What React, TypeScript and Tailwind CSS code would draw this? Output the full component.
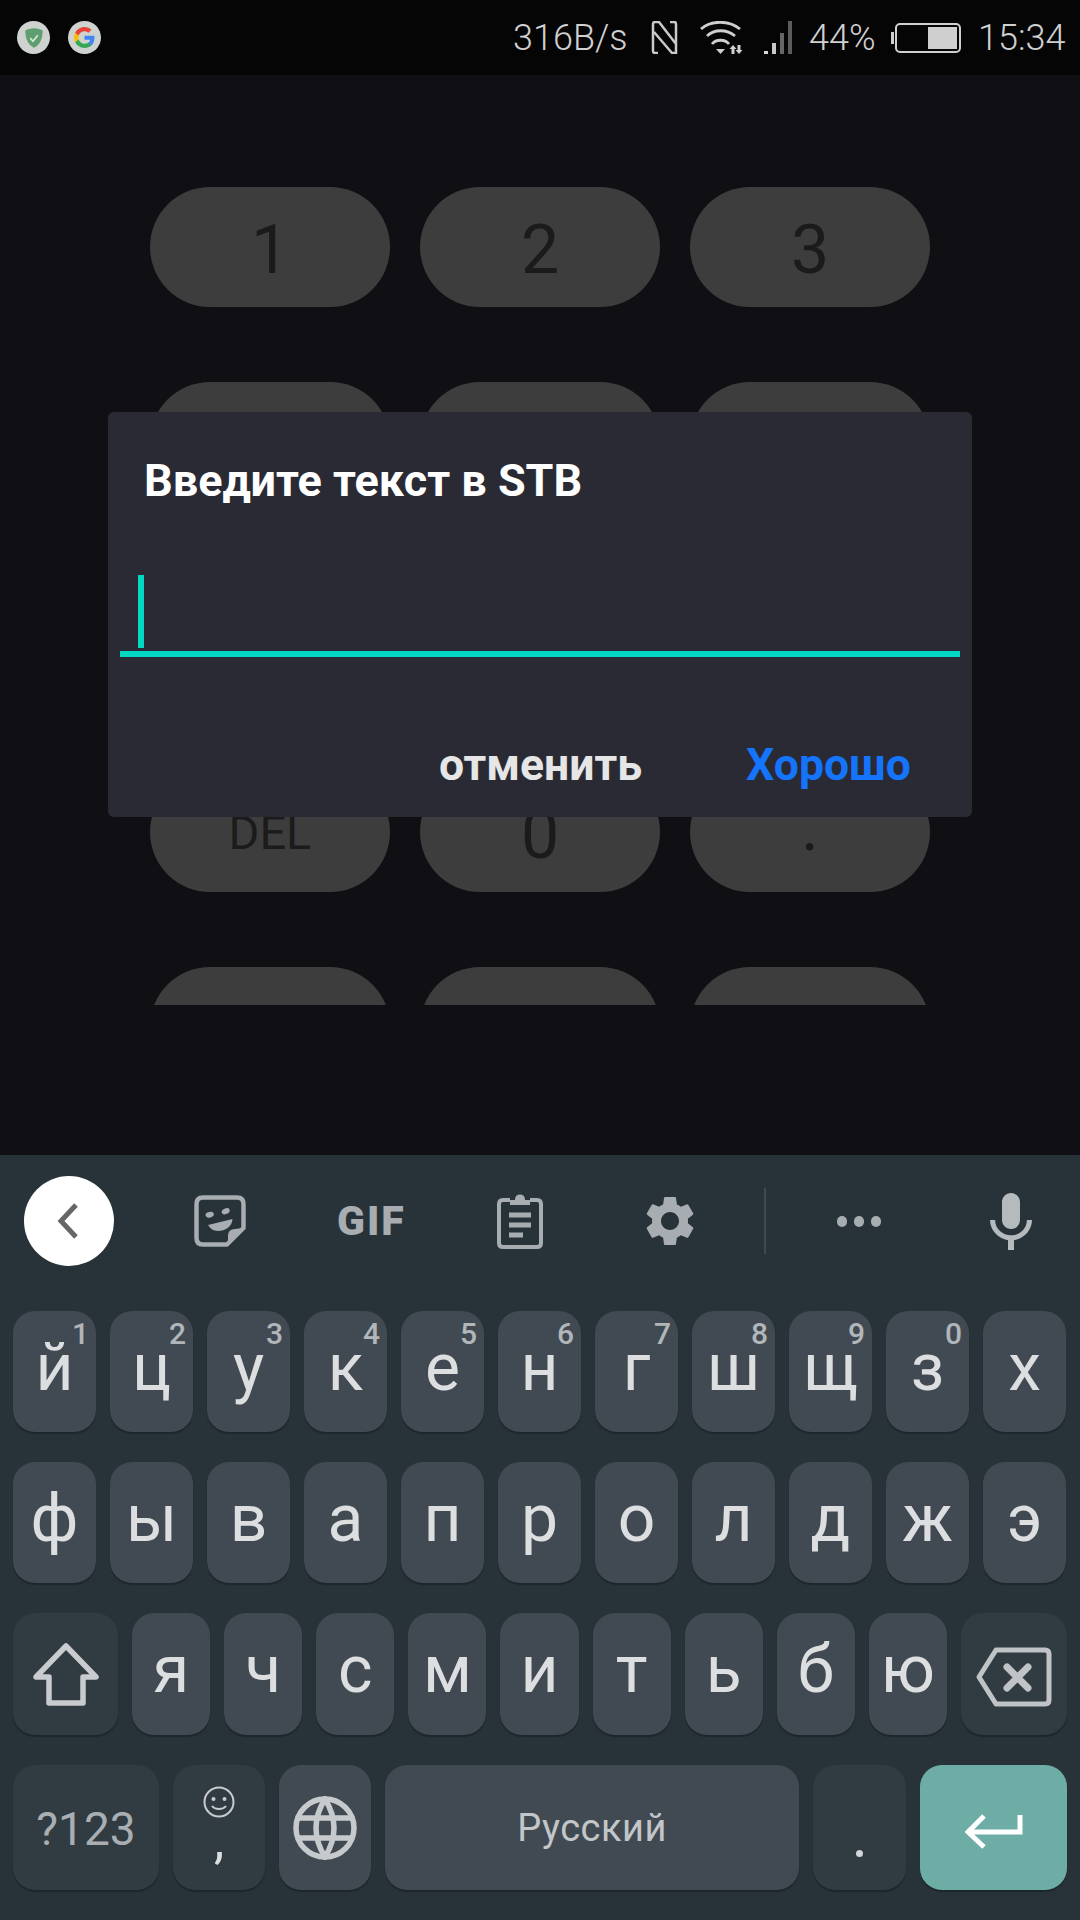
import React from "react";

const F = "[font-family:Roboto,'Noto_Sans',sans-serif]";

function Pill({ label, cls = "text-[68px] pt-[6px]" }: { label?: string; cls?: string }) {
  return (
    <div className={`w-[240px] h-[120px] rounded-[60px] bg-[#3d3d3d] flex items-center justify-center text-[#1b1b1b] ${cls}`}>
      {label}
    </div>
  );
}

function Key({
  label,
  hint,
  w,
  dark,
  children,
  h = "h-[121px]",
}: {
  label?: string;
  hint?: string;
  w: string;
  dark?: boolean;
  children?: React.ReactNode;
  h?: string;
}) {
  return (
    <div
      className={`relative ${w} ${h} shrink-0 rounded-[22px] ${dark ? "bg-[#303b42]" : "bg-[#414a52]"} shadow-[0_2px_1px_#1d262b] flex items-center justify-center text-[#dcdee0] text-[66px] leading-none`}
    >
      {label && <span className="-mt-[8px]">{label}</span>}
      {hint && (
        <span className="absolute right-[7px] top-[5px] text-[30px] leading-[36px] font-medium text-[#b1b6ba]">{hint}</span>
      )}
      {children}
    </div>
  );
}

function StatusBar() {
  return (
    <div className="h-[75px] shrink-0 bg-[#050506] flex items-center pl-[17px] text-[#d0d0d0] text-[36px] font-light">
      <div className="w-[33px] h-[33px] rounded-full bg-[#cfd3cf] flex items-center justify-center">
        <svg viewBox="0 0 24 24" className="w-[26px] h-[26px]">
          <path d="M12 3c-3 0-6 1-8 2 0 7 2 13 8 16 6-3 8-9 8-16-2-1-5-2-8-2z" fill="#5f9e6e" />
          <path d="M8.5 12l2.5 3 4.5-5.5" fill="none" stroke="#d8ecd9" strokeWidth="1.5" />
        </svg>
      </div>
      <div className="w-[33px] h-[33px] ml-[18px] rounded-full bg-[#cfd3cf] flex items-center justify-center">
        <svg viewBox="0 0 24 24" className="w-[25px] h-[25px]">
          <path d="M21.6 12.2c0-.7-.1-1.4-.2-2H12v3.9h5.4c-.2 1.2-.9 2.300-2 3v2.500h3.200c1.900-1.700 3-4.300 3-7.400z" fill="#4285f4" />
          <path d="M12 22c2.700 0 5-.9 6.600-2.400l-3.200-2.500c-.9.6-2 1-3.400 1-2.600 0-4.800-1.800-5.600-4.100H3.100v2.600C4.800 19.800 8.100 22 12 22z" fill="#34a853" />
          <path d="M6.400 14c-.2-.6-.3-1.300-.3-2s.1-1.400.3-2V7.400H3.100C2.400 8.700 2 10.300 2 12s.4 3.300 1.100 4.600L6.400 14z" fill="#fbbc05" />
          <path d="M12 6c1.500 0 2.800.5 3.800 1.500l2.900-2.900C17 3 14.700 2 12 2 8.100 2 4.800 4.200 3.100 7.400L6.400 10C7.200 7.700 9.400 6 12 6z" fill="#ea4335" />
        </svg>
      </div>
      <span className="ml-[412px] w-[115px] whitespace-nowrap leading-none">316B/s</span>
      <svg viewBox="0 0 27 33" className="ml-[23px] w-[27px] h-[33px]" fill="none" stroke="#c9c9c9" strokeWidth="2.5">
        <path d="M7 32H4Q2 32 2 30V3Q2 1 4 1H8L25 23M19 1H23Q25 1 25 3V32H21L3 11" />
      </svg>
      <svg viewBox="0 0 43 33" className="ml-[22px] w-[43px] h-[33px]" fill="none" stroke="#cfcfcf">
        <path d="M1 8C11 -1 29 -1 40 8" strokeWidth="2.800" />
        <path d="M7 15C14 8 27 8 35 15" strokeWidth="2.800" />
        <path d="M12 23C16 18 25 18 29 23" strokeWidth="2.800" />
        <path d="M16 28h9l-4.500 5z" fill="#cfcfcf" stroke="none" />
        <path d="M33 33V26" strokeWidth="3" />
        <path d="M29.500 28l3.500-4 3.500 4z" fill="#cfcfcf" stroke="none" />
        <path d="M39 24V31" strokeWidth="3" />
        <path d="M35.500 29l3.500 4 3.500-4z" fill="#cfcfcf" stroke="none" />
      </svg>
      <svg viewBox="0 0 28 33" className="ml-[21px] w-[28px] h-[33px]">
        <rect x="0" y="30" width="4" height="3" fill="#d8d8d8" />
        <rect x="8" y="22" width="4" height="11" fill="#c8c8c8" />
        <rect x="16" y="12" width="4" height="21" fill="#666666" />
        <rect x="24" y="0" width="4" height="33" fill="#5c5c5c" />
      </svg>
      <span className="ml-[17px] w-[65px] whitespace-nowrap leading-none">44%</span>
      <svg viewBox="0 0 70 30" className="ml-[17px] w-[70px] h-[30px]">
        <rect x="0" y="9" width="3" height="12" fill="#cfcfcf" />
        <rect x="5" y="1" width="64" height="28" rx="4" fill="none" stroke="#cfcfcf" strokeWidth="2" />
        <rect x="37" y="4" width="29" height="22" fill="#cfcfcf" />
      </svg>
      <span className="ml-[17px] whitespace-nowrap leading-none">15:34</span>
    </div>
  );
}

function Pad() {
  return (
    <div className="relative h-[1080px] shrink-0 bg-[#0f0f14]">
      <div className="h-[930px] overflow-hidden pt-[112px] flex flex-col gap-[75px] items-center">
        <div className="flex gap-[30px] shrink-0">
          <Pill label="1" />
          <Pill label="2" />
          <Pill label="3" />
        </div>
        <div className="flex gap-[30px] shrink-0">
          <Pill />
          <Pill />
          <Pill />
        </div>
        <div className="flex gap-[30px] shrink-0">
          <Pill />
          <Pill />
          <Pill />
        </div>
        <div className="flex gap-[30px] shrink-0">
          <Pill label="DEL" cls="text-[47px] pt-[2px]" />
          <Pill label="0" />
          <Pill label="." cls="text-[68px] pb-[10px]" />
        </div>
        <div className="flex gap-[30px] shrink-0">
          <Pill />
          <Pill />
          <Pill />
        </div>
      </div>
      <div className="absolute left-[108px] top-[337px] w-[864px] h-[405px] rounded-[6px] bg-[#2a2a35] flex flex-col">
        <div className="pl-[36px] pt-[44px] text-[45px] leading-[50px] font-bold text-white">Введите текст в STB</div>
        <div className="ml-[30px] mt-[69px] w-[6px] h-[73px] bg-[#00d8c4]" />
        <div className="ml-[12px] mt-[3px] w-[840px] h-[6px] bg-[#00d8c4]" />
        <div className="mt-[83px] flex justify-end pr-[61px] text-[44.5px] leading-[50px] font-bold">
          <span className="text-[#e6e6e6]">отменить</span>
          <span className="ml-[104px] text-[#1474fb]">Хорошо</span>
        </div>
      </div>
    </div>
  );
}

function Toolbar() {
  return (
    <div className="h-[132px] shrink-0 flex items-center pl-[24px]">
      <div className="w-[90px] h-[90px] rounded-full bg-white flex items-center justify-center">
        <svg viewBox="0 0 24 36" className="w-[24px] h-[36px] -ml-[2px]" fill="none" stroke="#666" strokeWidth="5">
          <path d="M20 2L5 18l15 16" strokeLinejoin="miter" />
        </svg>
      </div>
      <svg viewBox="0 0 52 52" className="ml-[80px] w-[52px] h-[52px]" fill="none" stroke="#a7adb0" strokeWidth="4.500">
        <path d="M9 2.500H43Q49.500 2.500 49.500 9V33L33 49.500H9Q2.500 49.500 2.500 43V9Q2.500 2.500 9 2.500Z" strokeLinejoin="round" />
        <path d="M49 33L34 49V41Q34 34 41 34Z" fill="#a7adb0" stroke="none" />
        <ellipse cx="15.700" cy="19.700" rx="4.200" ry="2.800" fill="#a7adb0" stroke="none" transform="rotate(-12 15.700 19.700)" />
        <ellipse cx="31.700" cy="16.300" rx="4.200" ry="2.800" fill="#a7adb0" stroke="none" transform="rotate(-25 31.700 16.300)" />
        <path d="M14 30L38.500 24C38 32 31 36 24 36C19 36 16 33 14 30Z" fill="#a7adb0" stroke="none" />
      </svg>
      <span className="ml-[91px] w-[67px] text-center text-[41px] leading-none font-black tracking-[2px] text-[#a7adb0]">GIF</span>
      <svg viewBox="0 0 46 56" className="ml-[93px] w-[46px] h-[56px]" fill="none" stroke="#a7adb0" strokeWidth="4">
        <path d="M13 7H6Q2 7 2 11V50Q2 54 6 54H40Q44 54 44 50V11Q44 7 40 7H33" />
        <path d="M13 12V7H18Q18 1.500 23 1.500Q28 1.500 28 7H33V12Z" fill="#a7adb0" stroke="none" />
        <path d="M12 22H34M12 32H34M12 42H26" strokeWidth="5" />
      </svg>
      <svg viewBox="2.500 2 19 20" className="ml-[103px] w-[48px] h-[50px]" fill="#a7adb0">
        <path d="M19.14 12.94c.04-.3.06-.61.06-.94 0-.32-.02-.64-.07-.94l2.030-1.580c.18-.14.23-.41.12-.61l-1.920-3.320c-.12-.22-.37-.29-.59-.22l-2.390.96c-.5-.38-1.030-.7-1.620-.94l-.36-2.540c-.04-.24-.24-.41-.48-.41h-3.840c-.24 0-.43.17-.47.41l-.36 2.540c-.59.24-1.130.57-1.620.94l-2.390-.96c-.22-.08-.47 0-.59.22L2.740 8.870c-.12.21-.08.47.12.61l2.030 1.580c-.05.3-.09.63-.09.94s.02.64.07.94l-2.030 1.580c-.18.14-.23.41-.12.61l1.920 3.320c.12.22.37.29.59.22l2.390-.96c.5.38 1.030.7 1.620.94l.36 2.540c.05.24.24.41.48.41h3.840c.24 0 .44-.17.47-.41l.36-2.540c.59-.24 1.130-.56 1.620-.94l2.390.96c.22.08.47 0 .59-.22l1.920-3.320c.12-.22.07-.47-.12-.61l-2.010-1.580zM12 15.600c-1.980 0-3.600-1.620-3.600-3.600s1.620-3.600 3.600-3.600 3.600 1.620 3.600 3.600-1.620 3.600-3.600 3.600z" />
      </svg>
      <div className="ml-[70px] w-[2px] h-[66px] bg-[#3f4a50]" />
      <div className="ml-[71px] w-[44px] flex justify-between">
        <div className="w-[10px] h-[11px] rounded-full bg-[#a7adb0]" />
        <div className="w-[10px] h-[11px] rounded-full bg-[#a7adb0]" />
        <div className="w-[10px] h-[11px] rounded-full bg-[#a7adb0]" />
      </div>
      <svg viewBox="5 2 14 19" className="ml-[109px] w-[42px] h-[57px]" fill="#b5babd" preserveAspectRatio="none">
        <path d="M12 14c1.660 0 3-1.340 3-3V5c0-1.660-1.340-3-3-3S9 3.340 9 5v6c0 1.660 1.340 3 3 3zm5.300-3c0 3-2.540 5.100-5.300 5.100S6.700 14 6.700 11H5c0 3.410 2.720 6.230 6 6.720V21h2v-3.280c3.280-.48 6-3.300 6-6.720h-1.700z" />
      </svg>
    </div>
  );
}

const row1: [string, string?][] = [
  ["й", "1"], ["ц", "2"], ["у", "3"], ["к", "4"], ["е", "5"], ["н", "6"], ["г", "7"], ["ш", "8"], ["щ", "9"], ["з", "0"], ["х"],
];
const row2 = ["ф", "ы", "в", "а", "п", "р", "о", "л", "д", "ж", "э"];
const row3 = ["я", "ч", "с", "м", "и", "т", "ь", "б", "ю"];

function Keyboard() {
  return (
    <div className="flex-1 bg-[#283339] flex flex-col">
      <Toolbar />
      <div className="flex flex-col gap-[30px] pl-[13px] pt-[24px] w-[1067px]">
        <div className="flex gap-[14px]">
          {row1.map(([l, h]) => (
            <Key key={l} label={l} hint={h} w="w-[83px]" />
          ))}
        </div>
        <div className="flex gap-[14px]">
          {row2.map((l) => (
            <Key key={l} label={l} w="w-[83px]" />
          ))}
        </div>
        <div className="flex gap-[14px]">
          <Key w="w-[105px]" dark h="h-[122px]">
            <svg viewBox="0 0 66 63" className="w-[66px] h-[63px]" fill="none" stroke="#c9ccce" strokeWidth="5.500" strokeLinejoin="round">
              <path d="M33 3L63 34H50V60H16V34H3Z" />
            </svg>
          </Key>
          {row3.map((l) => (
            <Key key={l} label={l} w="flex-1" h="h-[122px]" />
          ))}
          <Key w="w-[106px]" dark h="h-[122px]">
            <svg viewBox="0 0 76 60" className="w-[76px] h-[60px] mt-[6px]" fill="none" stroke="#c0c4c7" strokeWidth="5">
              <path d="M20 3H69Q73 3 73 7V53Q73 57 69 57H20L3 30Z" strokeLinejoin="round" />
              <path d="M31 20L52 41M52 20L31 41" strokeLinecap="round" strokeWidth="7" />
            </svg>
          </Key>
        </div>
        <div className="flex gap-[14px]">
          <Key w="w-[146px]" dark h="h-[125px]">
            <span className="text-[46px] mt-[3px] text-[#a8aeb1]">?123</span>
          </Key>
          <Key w="w-[92px]" dark h="h-[125px]">
            <div className="flex flex-col items-center">
              <svg viewBox="0 0 32 32" className="w-[32px] h-[32px] -mt-[21px]" fill="none" stroke="#c9ccce" strokeWidth="2">
                <circle cx="16" cy="16" r="14.500" />
                <circle cx="10.500" cy="13" r="2" fill="#c9ccce" stroke="none" />
                <circle cx="21.500" cy="13" r="2" fill="#c9ccce" stroke="none" />
                <path d="M9 20c3 4 11 4 14 0" />
              </svg>
              <span className="text-[52px] mt-[3px] leading-[40px] h-[28px] text-[#dcdee0]">,</span>
            </div>
          </Key>
          <Key w="w-[92px]" h="h-[125px]">
            <svg viewBox="0 0 64 64" className="w-[64px] h-[64px]" fill="none" stroke="#c6cacd" strokeWidth="5.500">
              <circle cx="32" cy="32" r="29" />
              <path d="M32 3Q14 32 32 61Q50 32 32 3Z" />
              <path d="M6 22H58M6 42H58" />
            </svg>
          </Key>
          <Key w="w-[414px]" h="h-[125px]">
            <span className="text-[38px] text-[#c2c6c9] tracking-[0.5px]">Русский</span>
          </Key>
          <Key w="w-[93px]" dark h="h-[125px]">
            <div className="w-[7px] h-[7px] rounded-full bg-[#d4d7d9] mt-[52px]" />
          </Key>
          <Key w="w-[147px]" h="h-[125px]">
            <div className="absolute inset-0 rounded-[22px] bg-[#6dada6] flex items-center justify-center">
              <svg viewBox="0 0 58 36" className="w-[58px] h-[36px] mt-[6px]" fill="none" stroke="#ffffff" strokeWidth="5">
                <path d="M55 2V19H4M19 3L3 19l16 15" />
              </svg>
            </div>
          </Key>
        </div>
      </div>
    </div>
  );
}

export default function App() {
  return (
    <div className={`w-[1080px] h-[1920px] flex flex-col overflow-hidden ${F}`}>
      <StatusBar />
      <Pad />
      <Keyboard />
    </div>
  );
}
